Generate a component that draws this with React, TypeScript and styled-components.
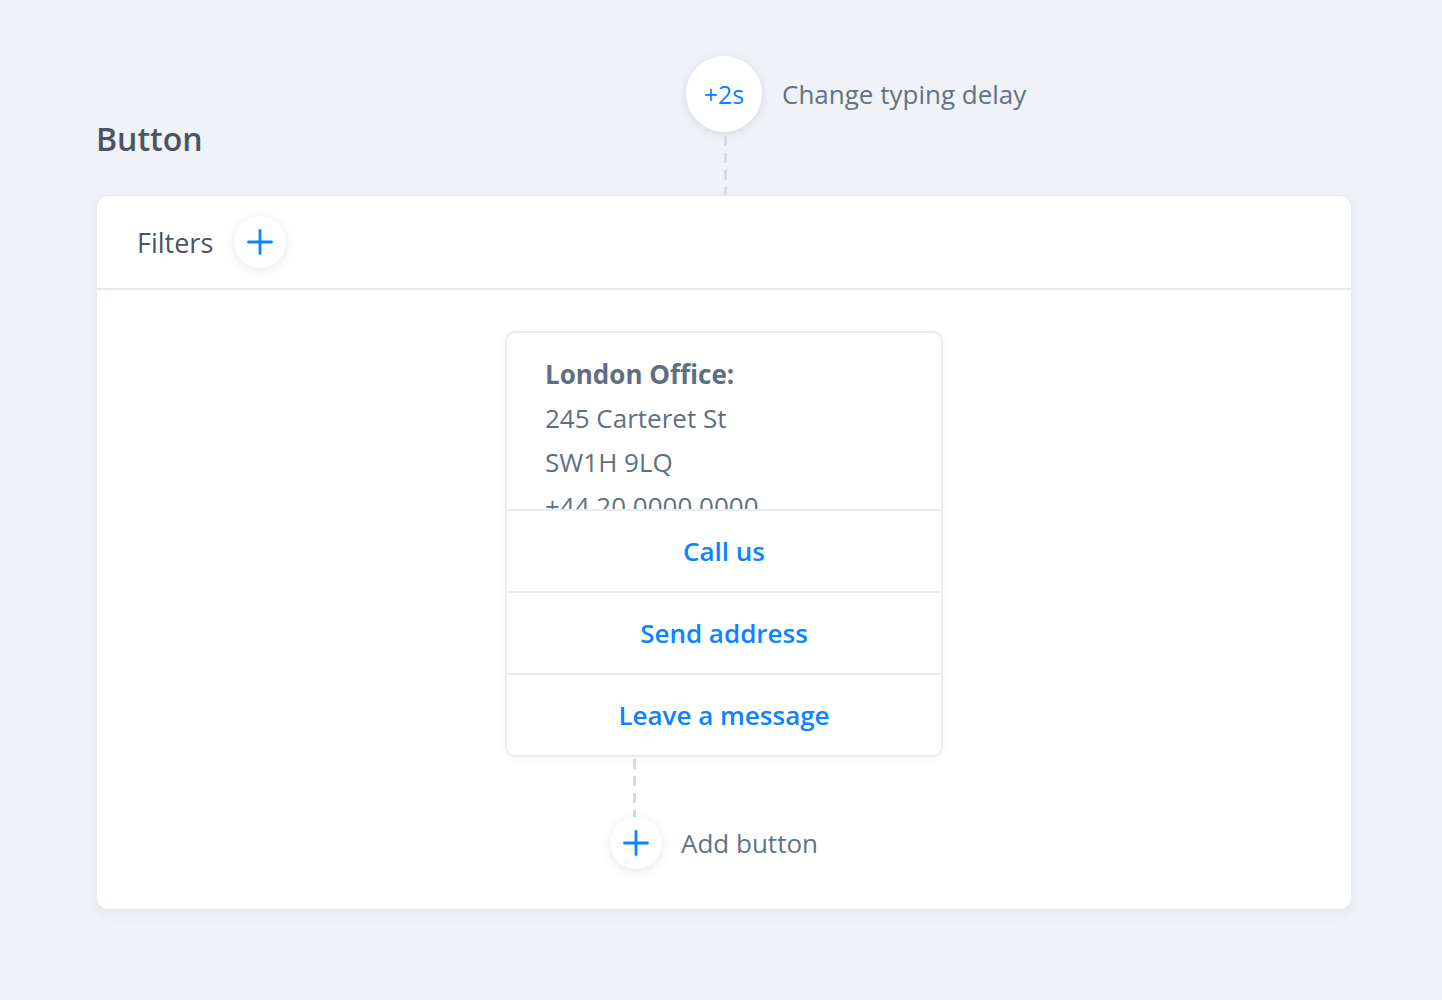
import React from "react";
import styled, { createGlobalStyle } from "styled-components";

const GlobalStyle = createGlobalStyle`
  * { box-sizing: border-box; }
  html, body {
    margin: 0;
    padding: 0;
    background: #eff2f6;
    font-family: "Open Sans", Lato, "Liberation Sans", sans-serif;
    -webkit-font-smoothing: antialiased;
  }
`;

const Page = styled.div`
  width: 1442px;
  min-height: 1000px;
  padding: 56px 90px 0 96px;
`;

const TopArea = styled.div`
  display: grid;
  grid-template-columns: 1fr 76px 1fr;
  grid-template-rows: 76px 63px;
`;

const Heading = styled.h1`
  grid-column: 1;
  grid-row: 1 / 3;
  align-self: end;
  margin: 0 0 36px 0;
  font-size: 32px;
  line-height: 40px;
  font-weight: 600;
  color: #4b5463;
`;

const Circle = styled.div<{ $size: number }>`
  width: ${(p) => p.$size}px;
  height: ${(p) => p.$size}px;
  flex-shrink: 0;
  border-radius: 50%;
  background: #ffffff;
  box-shadow: 0 2px 10px rgba(40, 55, 80, 0.12);
  display: flex;
  align-items: center;
  justify-content: center;
  color: #0a84ff;
`;

const DelayText = styled.span`
  font-size: 25px;
  color: #0a84ff;
`;

const NodeLabel = styled.span`
  font-size: 26px;
  color: #627386;
`;

const DelayLabel = styled(NodeLabel)`
  grid-column: 3;
  grid-row: 1;
  align-self: center;
  margin-left: 20px;
`;

const Connector = styled.div<{ $height: number }>`
  width: 3px;
  height: ${(p) => p.$height}px;
  background: repeating-linear-gradient(
    to bottom,
    #d5dae2 0,
    #d5dae2 10px,
    transparent 10px,
    transparent 17px
  );
`;

const TopConnector = styled(Connector)`
  grid-column: 2;
  grid-row: 2;
  justify-self: center;
  margin-left: 3px;
  margin-top: 4px;
`;

const Card = styled.div`
  width: 1256px;
  background: #ffffff;
  border: 1px solid #e6eaf0;
  border-radius: 12px;
  box-shadow: 0 4px 14px rgba(40, 55, 80, 0.05);
`;

const CardHeader = styled.div`
  height: 94px;
  display: flex;
  align-items: center;
  gap: 21px;
  padding: 0 40px;
  border-bottom: 2px solid #e4e9ef;
`;

const HeaderTitle = styled.span`
  font-size: 27px;
  color: #4b5463;
`;

const CardBody = styled.div`
  display: flex;
  flex-direction: column;
  align-items: center;
  padding: 41px 0 40px;
`;

const Column = styled.div`
  width: 438px;
  display: flex;
  flex-direction: column;
`;

const Bubble = styled.div`
  border: 2px solid #e7ecf1;
  border-radius: 10px;
  overflow: hidden;
  box-shadow: 0 2px 8px rgba(40, 55, 80, 0.04);
`;

const Address = styled.div`
  height: 176px;
  overflow: hidden;
  padding: 19px 38px 0;
  font-size: 26px;
  line-height: 44px;
  color: #5f6f81;
`;

const AddressTitle = styled.div`
  font-weight: 700;
`;

const ActionButton = styled.button`
  display: block;
  width: 100%;
  height: 82px;
  border: none;
  border-top: 2px solid #e7ecf1;
  background: #ffffff;
  font-family: inherit;
  font-size: 26px;
  font-weight: 600;
  color: #0a84ff;
  cursor: pointer;
`;

const BottomConnector = styled(Connector)`
  margin: 2px 0 0 128px;
`;

const AddRow = styled.div`
  display: flex;
  align-items: center;
  gap: 19px;
  margin-left: 105px;
`;

const PlusIcon = () => (
  <svg width="26" height="26" viewBox="0 0 26 26" fill="none">
    <path
      d="M13 1.5v23M1.5 13h23"
      stroke="#0a84ff"
      strokeWidth="2.8"
      strokeLinecap="round"
    />
  </svg>
);

const actions = ["Call us", "Send address", "Leave a message"];

export default function App() {
  return (
    <Page>
      <GlobalStyle />
      <TopArea>
        <Heading>Button</Heading>
        <Circle $size={76}>
          <DelayText>+2s</DelayText>
        </Circle>
        <DelayLabel>Change typing delay</DelayLabel>
        <TopConnector $height={59} />
      </TopArea>

      <Card>
        <CardHeader>
          <HeaderTitle>Filters</HeaderTitle>
          <Circle $size={52}>
            <PlusIcon />
          </Circle>
        </CardHeader>

        <CardBody>
          <Column>
            <Bubble>
              <Address>
                <AddressTitle>London Office:</AddressTitle>
                <div>245 Carteret St</div>
                <div>SW1H 9LQ</div>
                <div>+44 20 0000 0000</div>
              </Address>
              {actions.map((label) => (
                <ActionButton key={label}>{label}</ActionButton>
              ))}
            </Bubble>
            <BottomConnector $height={58} />
            <AddRow>
              <Circle $size={52}>
                <PlusIcon />
              </Circle>
              <NodeLabel>Add button</NodeLabel>
            </AddRow>
          </Column>
        </CardBody>
      </Card>
    </Page>
  );
}
